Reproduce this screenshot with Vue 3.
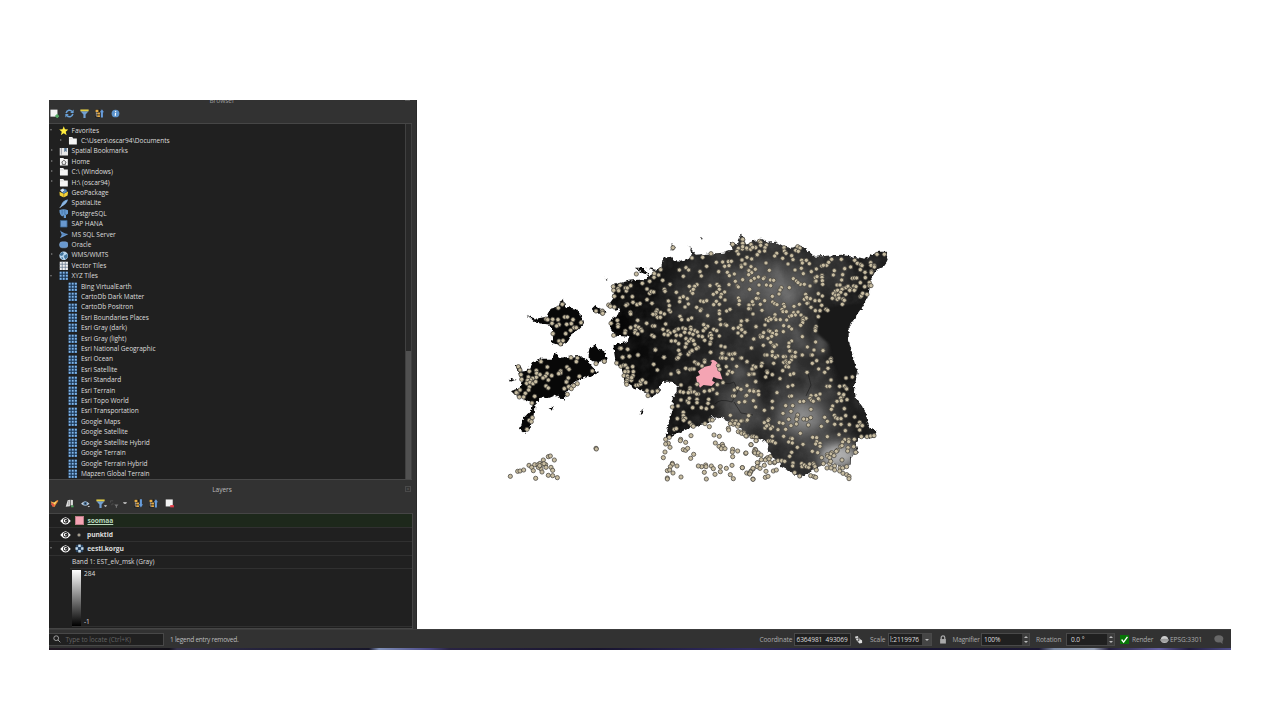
<script setup>
const tree = [
  ['Favorites', 'star', 0, 'v'], ['C:\\Users\\oscar94\\Documents', 'folder', 1, '>'],
  ['Spatial Bookmarks', 'book', 0, '>'], ['Home', 'home', 0, '>'], ['C:\\ (Windows)', 'folder', 0, '>'],
  ['H:\\ (oscar94)', 'folder', 0, '>'], ['GeoPackage', 'gpkg', 0], ['SpatiaLite', 'feather', 0],
  ['PostgreSQL', 'pg', 0], ['SAP HANA', 'hana', 0], ['MS SQL Server', 'mssql', 0], ['Oracle', 'oracle', 0],
  ['WMS/WMTS', 'globe', 0, '>'], ['Vector Tiles', 'vgrid', 0], ['XYZ Tiles', 'grid', 0, 'v'],
  ...['Bing VirtualEarth', 'CartoDb Dark Matter', 'CartoDb Positron', 'Esri Boundaries Places', 'Esri Gray (dark)',
    'Esri Gray (light)', 'Esri National Geographic', 'Esri Ocean', 'Esri Satellite', 'Esri Standard', 'Esri Terrain',
    'Esri Topo World', 'Esri Transportation', 'Google Maps', 'Google Satellite', 'Google Satellite Hybrid',
    'Google Terrain', 'Google Terrain Hybrid', 'Mapzen Global Terrain'].map(n => [n, 'grid', 1])
].map(([name, icon, level, arrow]) => ({ name, icon, level, arrow }))

// Sample points, grouped by map tile; tile-local units are a third of a pixel.
const tiles = [
  [500, 290, `187,43 175,54 138,87 143,89 158,88 174,89 156,100 177,104 170,108 194,81 202,81 200,103 219,89 243,98 214,101 222,113 229,113 212,121 197,131 159,131 177,153 189,152 182,162 288,63 307,63 307,69 288,221 313,214 213,203 232,204 229,215 123,215 142,231 201,231 207,238 182,243 182,249 176,251 55,230 60,240 63,254 65,268 88,244 109,242 110,250 120,254 141,251 155,257 136,259 129,264 145,270 109,262 98,265 92,270 85,261 83,271 80,280 90,277 88,291 99,281 107,275 138,288 145,294 86,300 76,310 60,300 52,309 49,308 58,321 71,321 104,319 96,339 238,259 205,264 200,275 199,276 277,243 193,296 206,290 214,296 221,287 232,281 202,313 97,383 88,391 94,395 81,418 31,559 53,544 60,543 71,540 87,526 95,532 104,524 100,542 107,565 114,524 120,520 127,523 130,510 137,524 138,532 145,500 151,498 163,510 153,532 123,537 115,532 126,546 158,541 145,556 158,557 172,563 288,475 289,477 132,521 119,527`],
  [600, 230, `219,53 276,84 308,82 333,71 398,43 428,28 429,39 453,44 415,55 411,64 427,57 441,57 452,58 467,52 478,34 471,75 415,72 349,97 368,96 385,95 394,94 374,109 387,107 424,107 436,102 441,82 426,90 455,87 465,117 109,132 163,131 176,135 182,119 162,142 149,154 127,160 188,151 238,120 258,113 266,120 250,139 300,125 304,138 320,109 356,125 382,127 388,137 403,132 446,121 454,126 446,134 464,146 453,153 428,150 406,154 387,164 412,168 415,171 448,178 40,170 41,181 43,199 60,166 54,176 56,182 76,174 79,183 82,174 92,167 68,201 97,200 43,231 26,225 31,229 7,245 8,250 82,223 78,226 99,217 111,224 120,221 156,220 141,209 91,247 92,252 52,271 33,280 54,284 54,290 41,316 141,177 149,190 154,185 161,186 193,178 195,184 210,163 229,187 205,213 208,227 211,245 240,204 250,200 262,206 239,215 265,222 255,231 268,169 291,164 284,169 274,184 278,190 280,178 330,167 351,163 357,169 358,178 374,186 364,193 350,187 340,193 362,201 375,210 349,214 358,223 341,224 302,213 311,215 320,212 290,232 303,238 301,242 323,257 358,243 358,251 380,243 390,238 360,268 415,204 418,212 417,223 446,225 450,236 474,205 459,223 171,240 182,248 168,246 166,253 159,253 173,262 181,262 193,252 207,240 240,259 245,269 265,269 275,264 113,271 140,280 158,288 164,288 197,282 107,288 92,293 116,292 106,301 105,308 113,312 123,298 126,303 76,303 75,309 156,316 162,320 189,298 193,313 204,303 210,309 228,300 223,304 235,297 249,294 256,297 254,307 272,292 273,298 285,302 269,309 279,313 292,306 296,318 307,320 311,284 323,289 316,295 310,302 341,298 350,302 331,310 328,318 334,316 362,284 376,284 380,286 358,318 334,325 424,274 441,271 422,286 415,293 425,300 414,309 434,307 425,318 400,295 468,290 462,327 455,354 204,315 229,316 242,316 258,326 214,333 226,333 236,341 259,341 266,333 273,327 280,332 256,351 284,343 314,331 331,337 330,342 294,353 289,356 363,348 375,351 276,362 236,361 265,373 240,373 332,367 368,369 366,379 386,372 405,371 60,355 63,355 83,358 166,359 88,379 114,375 68,382 192,382 233,384 362,384`],
  [740, 230, `8,28 8,40 8,50 20,54 33,44 47,53 62,38 62,46 79,45 75,53 58,65 74,63 52,74 35,87 38,52 6,90 15,102 4,111 33,110 46,118 27,122 35,128 26,134 78,99 88,121 8,149 33,152 43,145 55,141 73,143 70,146 91,150 101,151 57,165 79,165 92,167 29,178 54,190 110,70 104,78 132,53 133,63 138,70 155,77 159,89 128,85 144,102 173,50 180,54 167,61 175,64 185,91 199,91 208,101 187,99 184,115 190,131 165,120 214,125 229,117 245,108 260,106 266,97 275,88 304,88 250,106 283,122 314,116 332,111 344,91 352,100 362,104 366,107 392,98 393,106 403,107 403,111 394,124 394,128 375,127 361,119 411,73 433,73 160,146 169,153 181,163 174,158 193,163 210,168 148,173 226,143 231,140 226,155 228,153 246,136 246,142 247,152 248,163 280,135 308,134 305,150 337,145 343,144 350,144 376,143 361,158 388,158 388,167 393,167 291,165 300,165 309,175 318,173 324,169 331,177 341,168 345,177 348,170 374,170 329,181 343,181 124,173 120,180 117,192 97,199 74,212 61,223 49,205 37,215 27,225 26,236 66,241 39,252 4,273 21,271 98,216 104,221 111,224 131,223 133,230 126,238 129,245 139,245 162,229 161,248 166,255 174,246 183,255 192,263 198,265 188,267 189,271 188,278 182,286 178,223 193,208 202,206 211,206 197,193 200,202 204,219 201,220 213,232 225,212 235,191 247,198 238,212 245,226 240,242 226,242 258,238 263,241 235,260 286,184 293,181 306,178 302,187 280,191 287,196 295,195 277,205 290,206 292,208 297,204 309,207 313,211 307,223 317,193 361,200 364,198 368,190 381,193 105,254 104,264 88,264 79,269 85,272 93,268 108,269 121,269 140,270 149,259 155,257 75,285 48,290 5,299 15,307 41,327 61,317 62,321 71,308 68,320 86,302 90,304 109,303 98,310 95,319 109,313 84,325 92,337 109,345 70,346 100,347 103,350 34,354 131,287 130,305 147,290 155,297 187,320 155,333 147,339 146,350 152,363 228,290 226,296 226,302 227,336 202,351 222,360 249,361 77,375 109,378 136,380 155,380 166,380 186,375 215,375 273,386`],
  [600, 350, `166,0 192,22 231,26 235,23 240,13 265,13 270,6 276,2 332,7 366,10 367,24 389,13 398,12 404,11 378,25 397,27 422,24 441,36 460,50 459,57 467,52 13,34 50,39 63,49 71,46 76,46 82,54 84,65 98,50 100,65 75,65 72,77 82,78 84,86 81,91 79,97 80,103 94,91 99,77 95,83 108,106 115,105 122,102 122,94 127,90 137,98 68,22 88,19 114,15 161,43 172,60 141,122 144,137 157,125 172,123 213,72 234,63 236,67 257,55 270,58 276,57 282,57 284,36 291,41 295,42 306,48 314,31 314,36 355,47 379,50 387,64 397,67 382,72 410,49 457,72 446,72 467,95 359,58 369,98 352,104 338,118 351,131 329,122 313,124 291,103 270,114 270,120 273,126 265,128 283,126 295,132 290,132 243,105 241,125 250,127 243,150 262,153 268,145 291,148 291,158 266,158 304,173 319,176 326,148 324,160 337,171 278,173 217,171 234,168 250,187 250,197 232,206 250,206 256,205 251,211 269,218 275,225 280,229 330,210 337,210 315,221 328,230 223,238 229,236 398,138 403,138 403,120 413,114 423,118 441,107 448,124 467,124 460,121 437,138 417,157 436,155 461,153 467,171 391,196 397,213 398,219 400,223 391,221 385,235 386,240 408,213 405,220 413,229 416,222 426,212 440,212 447,196 415,245 423,246 431,248 440,258 459,259 467,263 469,271 453,284 465,298 463,307 472,309 473,314 197,268 208,262 205,280 197,282 210,292 195,306 190,323 242,268 241,272 257,277 250,299 257,301 263,295 281,313 272,325 273,257 342,255 358,259 346,279 357,289 367,283 369,289 364,296 375,296 398,298 397,306 413,303 398,320 437,310 396,346 427,353 379,355 361,350 361,365 345,373 334,348 340,356 317,345 318,350 305,350 295,348 313,367 319,387 243,381 217,340 217,343 211,350 231,348 202,362 209,360 219,369 202,384 202,387 391,374 400,386 459,387 440,369 448,371 453,363 459,357 474,339`],
  [740, 350, `5,24 21,35 97,5 75,15 81,15 97,17 113,18 106,22 130,20 131,37 138,33 141,38 142,44 154,30 148,37 158,20 165,20 138,50 146,51 66,40 64,48 40,48 36,57 47,51 101,40 149,3 166,7 187,15 214,15 217,15 249,2 272,28 273,34 263,36 230,32 217,40 264,55 254,67 236,57 201,67 128,62 81,64 82,68 97,74 77,81 27,74 42,72 47,95 151,74 161,71 120,86 144,110 158,106 149,139 155,138 21,107 3,118 29,122 41,124 55,124 56,134 20,136 40,152 14,155 47,171 3,213 22,210 26,197 73,181 97,154 97,174 137,167 158,167 180,155 191,154 111,128 213,137 228,136 240,132 210,145 215,151 220,154 237,149 235,146 213,178 129,190 153,184 146,208 173,195 171,204 170,208 200,208 212,203 191,207 205,225 153,227 169,222 118,218 129,220 137,238 114,239 97,231 92,236 86,208 84,212 73,218 85,225 75,234 80,228 5,250 13,252 18,258 36,260 42,260 49,262 48,272 273,90 261,109 269,109 318,84 337,81 299,109 313,108 318,114 320,117 297,131 308,139 311,134 302,144 304,152 321,149 291,154 278,168 274,178 313,176 283,196 287,203 293,206 303,206 317,197 344,201 254,202 262,214 244,229 284,223 303,223 316,242 328,224 359,217 361,225 352,228 367,227 359,240 343,268 364,260 381,260 392,258 402,257 181,250 131,259 153,265 157,266 146,276 157,279 97,259 85,273 92,273 98,274 106,279 172,292 189,283 218,262 230,263 230,275 227,282 240,280 240,289 262,260 314,269 326,269 326,275 308,276 302,289 306,287 324,293 341,290 347,307 323,303 292,301 289,304 275,308 272,312 282,317 262,314 263,319 269,323 245,323 233,308 217,304 297,254 33,284 47,300 18,309 43,305 45,309 55,309 63,315 78,327 83,323 91,320 76,330 87,327 64,329 90,338 103,338 105,336 114,332 125,332 134,334 155,307 149,319 159,339 158,348 185,341 186,350 193,345 199,350 206,352 209,342 220,340 222,344 225,350 229,360 250,341 269,341 272,334 306,330 284,348 261,354 273,354 284,360 300,354 308,354 320,350 299,363 309,370 320,374 327,379 327,386 212,377 222,380 227,382 164,368 179,378 52,338 52,350 39,355 60,355 73,346 78,364 32,366 29,372 39,388 100,363 109,360 76,382 84,379 7,353`]
]
const dots = tiles.flatMap(([ox, oy, s]) => s.split(' ').map(p => {
  const [x, y] = p.split(',').map(Number)
  return { x: ox + x / 3, y: oy + y / 3 }
}))
const tools = ['brush', 'addgroup', 'view', 'filter', 'expr', 'expand', 'collapse', 'remove']
const land = 'M613 285 628 281 647 279 649 276 655 272 645 268 656 270 662 266 663 258 670 257 672 261 680 262 692 257 688 246 695 255 707 254 723 253 732 250 729 242 737 245 740 234 743 240 744 244 750 243 752 239 755 241 760 239 767 243 775 242 784 247 790 248 798 246 804 248 814 257 840 255 865 259 877 252 885 252 888 260 883 267 875 271 870 280 868 294 863 306 848 327 848 340 853 360 857 373 853 387 855 398 865 412 867 423 870 429 876 431 874 438 858 438 855 445 858 453 850 457 851 465 843 467 830 463 818 467 807 473 800 478 790 472 780 467 780 462 772 458 767 450 768 443 760 440 750 437 740 430 732 423 725 421 722 417 715 419 711 416 708 423 690 428 673 435 665 440 668 423 672 410 672 398 677 392 677 387 672 382 662 382 659 387 659 392 650 398 647 393 633 388 625 383 623 372 615 362 613 350 613 345 627 342 628 337 615 336 610 330 610 320 617 315 620 308 615 310 608 305 613 298Z'
</script>

<template>
  <div class="page">
    <svg width="0" height="0" class="defs">
      <symbol id="star" viewBox="0 0 10 10"><path fill="#ffec3d" d="M5 .2 6.3 3.5 9.8 3.7 7.1 6 8 9.6 5 7.6 2 9.6 2.9 6 .2 3.7 3.7 3.5Z"/></symbol>
      <symbol id="folder" viewBox="0 0 10 10"><path fill="#f4f4f4" d="M1 1h3.5l1 1.6H9.3V9H1Z"/><path d="M1 3h3.8" stroke="#aaa" stroke-width=".4"/></symbol>
      <symbol id="book" viewBox="0 0 10 10"><path fill="#e8e8e8" d="M.8 1h8.7v8H.8Z"/><path fill="#5b7895" d="M5.5 1h2.6v4.4L6.8 4.2 5.5 5.4Z"/><path stroke="#667" stroke-width=".6" d="M2.5 1v7"/></symbol>
      <symbol id="home" viewBox="0 0 10 10"><path fill="#f4f4f4" d="M1 1h3.5l1 1.2H9.3V9H1Z"/><path fill="none" stroke="#444" stroke-width=".8" d="M2.5 5.7 5.2 3.4 7.8 5.7M3.5 5.5v2.3h3.3V5.5"/></symbol>
      <symbol id="gpkg" viewBox="0 0 10 10"><path fill="#f5d338" d="M.5 4 5 6v4L.8 8ZM5 6l4.6-2.4L9 8 5 10Z"/><path fill="#d4e5f3" d="M1 2.2 4.2.4l2 2L3.4 4.7Z"/><path fill="#5589bd" d="M4.2.4 8 1.8 8.3 4 5 6 3.4 4.7 6.2 2.4Z"/><path stroke="#7c691c" stroke-width=".6" d="M5 6v4"/></symbol>
      <symbol id="feather" viewBox="0 0 10 10"><path fill="#79a9dc" d="M9.6.5Q4 .8 2 7L.5 9.6 3 7.8Q8 6 9.6.5Z"/><path stroke="#d5e4f4" stroke-width=".5" d="M.5 9.6 8 2"/></symbol>
      <symbol id="pg" viewBox="0 0 10 10"><path fill="#679ad0" d="M.5 1Q5-.4 9.5 1.2V5L7.4 6.4V9.4H5V6.6L3.4 7.8Q1.3 7 .6 3.8Z"/><path fill="none" stroke="#315f90" stroke-width=".6" d="M3.2 1.2v4.5M6.2 1v4.7h1.3M4 3h.6"/></symbol>
      <symbol id="hana" viewBox="0 0 10 10"><path fill="#6999cf" stroke="#39648f" stroke-width=".8" d="M1.5 1.5h7v7h-7Z"/></symbol>
      <symbol id="mssql" viewBox="0 0 10 10"><path fill="#6999cf" d="M1 .2Q3.5 3 9.8 4.3 6 6.8 1 8.6L2.9 5Z"/><path stroke="#315f90" stroke-width=".5" d="M2.5 4.3h4"/></symbol>
      <symbol id="oracle" viewBox="0 0 10 10"><rect x=".6" y="1.9" width="8.8" height="6.3" rx="2.6" fill="#6999cf" stroke="#8fb4df" stroke-width=".5"/></symbol>
      <symbol id="globe" viewBox="0 0 10 10"><circle cx="5" cy="5" r="4.6" fill="#bad7ee"/><path fill="#44779f" d="M1 3 4 1l1.2 2-2 2.2L1 4.5ZM5 5l3.8-2 .4 3L7 8.6 5.6 7ZM2 7l2-.5.6 2.6Z"/></symbol>
      <symbol id="grid" viewBox="0 0 10 10"><path fill="#386aa0" d="M.7.7h8.8v8.8H.7Z"/><path fill="#83b7e9" d="M.8.8h2v2h-2zM4 .8h2v2H4zM7.2.8h2v2h-2zM.8 4h2v2h-2zM4 4h2v2H4zM7.2 4h2v2h-2zM.8 7.2h2v2h-2zM4 7.2h2v2H4zM7.2 7.2h2v2h-2z"/><path stroke="#1d3148" stroke-width=".8" d="M3.4.5v9M6.6.5v9M.5 3.4h9M.5 6.6h9"/></symbol>
      <symbol id="vgrid" viewBox="0 0 10 10"><path fill="#f3f3f3" d="M.8.8h8.6v8.6H.8Z"/><path stroke="#65758a" stroke-width=".8" d="M3.4.5v9M6.6.5v9M.5 3.4h9M.5 6.6h9"/></symbol>
      <symbol id="eye" viewBox="0 0 12 10"><path fill="#fff" d="M.3 5Q6-3 11.7 5 6 12.7.3 5Z"/><circle cx="6.2" cy="4.7" r="2.9" fill="#222"/><circle cx="6" cy="4.7" r="1.9" fill="#fff"/><circle cx="6.6" cy="4.7" r="1.2" fill="#222"/></symbol>
      <symbol id="view" viewBox="0 0 10 10"><path fill="#c6d2dd" d="M0 5.3Q4.6-.5 9.4 5.3 5 9.8 0 5.3Z"/><circle cx="4.8" cy="5" r="2.3" fill="#5c83a9"/><circle cx="4.8" cy="5" r="1" fill="#1d2b39"/><path fill="#ddd" d="M7.3 7.7h2.7L8.7 9.3Z"/></symbol>
      <symbol id="filter" viewBox="0 0 10 10"><path fill="#719fd2" d="M.5 2.5h9L6.2 6v4H3.8V6Z"/><path fill="#e3ce45" d="M.4.5h9.2v2H.4Z"/></symbol>
      <symbol id="collapse" viewBox="0 0 10 10"><path fill="#161616" d="M.3.5h5v8.8h-5Z"/><path fill="#e6ac47" d="M.6.7h3.2v2.6H.6ZM2.5 3.9h3v2.1h-3ZM2.5 6.9h3v2.1h-3Z"/><path fill="none" stroke="#ccc" stroke-width=".7" d="M1.4 3.2v4.9h1.2M1.4 4.9h1.2"/><path fill="#679cdb" d="M7.7.3 10 3.7H8.8v5.8H6.6V3.7H5.4Z"/></symbol>
      <symbol id="expand" viewBox="0 0 10 10"><path fill="#161616" d="M.3.5h5v8.8h-5Z"/><path fill="#e6ac47" d="M.6.7h3.2v2.6H.6ZM2.5 3.9h3v2.1h-3ZM2.5 6.9h3v2.1h-3Z"/><path fill="none" stroke="#ccc" stroke-width=".7" d="M1.4 3.2v4.9h1.2M1.4 4.9h1.2"/><path fill="#679cdb" d="M6.6.4h2.2v5.4H10L7.7 9.4 5.4 5.8h1.2Z"/></symbol>
      <symbol id="info" viewBox="0 0 10 10"><circle cx="5" cy="5" r="4.3" fill="#5d94cd"/><circle cx="5.2" cy="2.7" r=".7" fill="#fff"/><path stroke="#fff" stroke-width="1.2" d="M5.1 4.2 4.7 7.7"/></symbol>
      <symbol id="refresh" viewBox="0 0 10 10"><path fill="none" stroke="#69a0d7" stroke-width="1.8" d="M1.3 4.5C2 1 6 .5 7.8 2.7M8.7 5.5C8 9 4 9.5 2.2 7.3"/><path fill="#69a0d7" d="M9.6.5v4H5.8ZM.4 9.5v-4h3.8Z"/></symbol>
      <symbol id="addlayer" viewBox="0 0 10 10"><path fill="#f3f3f3" d="M.5.7h7.8v7.8H.5Z"/><path stroke="#52a662" stroke-width="2" d="M8 5.7V10M5.8 8h4.4"/></symbol>
      <symbol id="remove" viewBox="0 0 10 10"><path fill="#f3f3f3" d="M.8.5h7.8v7.8H.8Z"/><path fill="#e23c47" d="M5.8 6.8h4.1v2.5H5.8Z"/></symbol>
      <symbol id="brush" viewBox="0 0 10 10"><path fill="#e88d3a" d="M.8 2.6 4.4 4.2 8 1.2 9.4 2 6.6 6 5 9 2.5 8Z"/><path fill="#db5445" d="M.8 5.5 3 4.5l2 2.4L3.4 9Z"/><path fill="#ffe26c" d="m1.5 2.8 3 1.3L7.6 2 5.4 6Z"/></symbol>
      <symbol id="addgroup" viewBox="0 0 10 10"><path fill="#ddd" d="m3 1.4 2.5-.7V8L.8 8.7ZM6.2.9l2.6.2v6H6.2Z"/><path fill="#52a662" d="M6.8 7.2h2.7v2H6.8Z"/><path stroke="#777" stroke-width=".5" d="M4 2v5"/></symbol>
      <symbol id="expr" viewBox="0 0 10 10"><path fill="none" stroke="#555" stroke-width=".8" d="M.5 4V2h3M2 7V5.5h2"/><path fill="#777" d="M4.8 6.2h4.6L7.7 8v1.6H6.5V8Z"/></symbol>
    </svg>
    <div class="window">
      <div class="main">
        <aside>
          <div class="browser-title"><span>Browser</span><i></i></div>
          <div class="tools top">
            <svg v-for="i in ['addlayer','refresh','filter','collapse','info']" :key="i"><use :href="'#' + i"/></svg>
          </div>
          <div class="browser">
            <ul>
              <li v-for="n in tree" :key="n.name" :class="{ child: n.level }">
                <b :class="{ down: n.arrow === 'v', right: n.arrow === '>' }"></b>
                <svg><use :href="'#' + n.icon"/></svg><span>{{ n.name }}</span>
              </li>
            </ul>
            <div class="scroll"><div></div></div>
          </div>
          <div class="layer-title"><span>Layers</span><i>×</i></div>
          <div class="tools low">
            <template v-for="t in tools" :key="t"><svg :class="t"><use :href="'#' + t"/></svg><em v-if="t === 'filter' || t === 'expr'" :class="'after-' + t"></em></template>
          </div>
          <div class="layers">
            <div class="layer active"><b></b><svg class="vis"><use href="#eye"/></svg><i class="pink"></i><span>soomaa</span></div>
            <div class="layer"><b></b><svg class="vis"><use href="#eye"/></svg><i class="point"></i><span>punktid</span></div>
            <div class="layer"><b class="down"></b><svg class="vis"><use href="#eye"/></svg>
              <svg class="raster" viewBox="0 0 10 10"><path fill="#294564" d="M1 1h8v8H1Z"/><path fill="#c7dff0" d="M3.6.5h2.8v2.7H3.6ZM.5 3.6h2.7v2.8H.5ZM6.8 3.6h2.7v2.8H6.8ZM3.6 6.8h2.8v2.7H3.6Z"/></svg><span>eesti.korgu</span></div>
            <div class="band">Band 1: EST_elv_msk (Gray)</div>
            <div class="legend"><i></i><div><span>284</span><span>-1</span></div></div>
          </div>
        </aside>
        <svg class="map" viewBox="417 100 814 529">
          <defs>
            <filter id="rag" x="-5%" y="-5%" width="110%" height="110%" color-interpolation-filters="sRGB"><feTurbulence type="fractalNoise" baseFrequency=".28" numOctaves="2" seed="4"/><feDisplacementMap in="SourceGraphic" scale="4.5" xChannelSelector="R" yChannelSelector="G"/></filter>
            <filter id="soft" x="-60%" y="-60%" width="220%" height="220%" color-interpolation-filters="sRGB"><feGaussianBlur stdDeviation="9"/></filter>
            <filter id="soft2" x="-60%" y="-60%" width="220%" height="220%" color-interpolation-filters="sRGB"><feGaussianBlur stdDeviation="3.5"/></filter>
            <filter id="edge" color-interpolation-filters="sRGB"><feGaussianBlur stdDeviation=".8"/></filter>
            <filter id="relief" color-interpolation-filters="sRGB"><feTurbulence type="fractalNoise" baseFrequency=".06" numOctaves="5" seed="9"/><feColorMatrix values="0 0 0 0 1  0 0 0 0 1  0 0 0 0 1  1.8 0 0 0 -.6"/></filter>
            <linearGradient id="base" x1="610" x2="860" y1="345" y2="300" gradientUnits="userSpaceOnUse"><stop stop-color="#020202"/><stop offset=".2" stop-color="#101010"/><stop offset=".45" stop-color="#282828"/><stop offset=".7" stop-color="#2d2d2d"/><stop offset="1" stop-color="#181818"/></linearGradient>
            <clipPath id="landclip"><path :d="land"/></clipPath>
          </defs>
          <g filter="url(#rag)" transform="translate(.7 -.2)">
            <path fill="url(#base)" :d="land"/>
            <g fill="#080808">
              <path d="M527 316 535 319 546 317 550 309 557 307 558 303 563 300 565 307 575 309 580 315 583 325 578 330 571 333 570 337 567 342 560 346 551 343 553 334 550 325 535 323Z"/>
              <path d="M515 370 520 372 527 371 531 363 541 359 551 359 555 351 558 358 570 357 580 356 588 363 597 373 588 377 577 380 570 385 565 394 564 401 555 395 548 398 540 398 535 403 534 414 529 430 524 434 519 430 523 418 531 410 532 404 524 400 515 395 511 391 518 389 521 385 523 377Z"/>
              <path d="M588 350 594 346 604 352 606 360 595 363 588 358ZM591 309 594 306 600 310 606 312 602 315 593 312ZM515 366 520 366 524 379 520 380ZM509 379 515 380 510 382ZM549 408 553 406 551 411ZM640 410 643 409 642 414 639 415ZM634 268 641 268 650 276 642 273ZM671 243 675 248 671 251ZM604 278 607 279 606 280ZM700 237 702 239 701 240Z"/>
            </g>
          </g>
          <g clip-path="url(#landclip)">
            <g filter="url(#soft)" fill="#b0b0b0">
              <ellipse cx="768" cy="285" rx="40" ry="22" opacity=".33"/><ellipse cx="786" cy="322" rx="22" ry="36" opacity=".18"/>
              <ellipse cx="802" cy="418" rx="22" ry="17" opacity=".72"/><ellipse cx="742" cy="405" rx="17" ry="26" opacity=".3"/>
              <ellipse cx="812" cy="400" rx="34" ry="30" opacity=".1"/><ellipse cx="838" cy="456" rx="20" ry="13" opacity="1"/>
              <ellipse cx="825" cy="275" rx="35" ry="17" opacity=".12"/><ellipse cx="700" cy="300" rx="35" ry="28" opacity=".1"/>
            </g>
            <g filter="url(#soft2)"><path fill="none" stroke="#999" stroke-width="6" opacity=".25" d="M773 268Q785 286 790 302M794 328 806 352"/><ellipse cx="821" cy="345" rx="7" ry="10" fill="#777" opacity=".55"/><ellipse cx="738" cy="372" rx="7" ry="8" fill="#888" opacity=".45"/><ellipse cx="838" cy="455" rx="16" ry="9" fill="#c0c0c0" opacity=".6"/><path fill="#151515" opacity=".75" d="M755 358 777 370 772 380 766 415 757 390ZM790 374 808 378 800 386Z"/></g>
            <rect x="605" y="230" width="285" height="250" filter="url(#relief)" opacity=".09"/>
            <path filter="url(#soft2)" fill="#191919" d="M828 325 848 378 855 408 880 440 860 438 842 400 834 380Z" opacity=".8"/>
            <g fill="none" stroke="#161616" stroke-width=".8" opacity=".65"><path d="M718 378Q725 387 734 382L738 391 732 402Q720 398 715 404M734 402 741 413 753 415M807 370 811 385 806 396"/></g>
            <path filter="url(#edge)" fill="#191919" d="M817 318 820 312 830 307 842 305 866 302 852 327 849 340 860 380 845 384 837 373 833 362 829 344 818 334Z"/>
          </g>
          <path class="park" d="M710 361 713 359.8 715.5 361 718.3 363.5 717.7 368 720 372 722.5 379.5 717 378.5 713.5 377 712 380.5 715 382.5 711.5 386 703.5 385 700 387.8 697 382 696 377 700 375 698 371.5 703.5 367 710.5 365.5 712 362Z"/>
          <circle v-for="(p, k) in dots" :key="k" :cx="p.x" :cy="p.y" r="2.1"/>
        </svg>
      </div>
      <footer>
        <div class="locate"><svg viewBox="0 0 10 10"><circle cx="4" cy="4" r="3"/><path d="m6.2 6.2 3 3"/></svg><span>Type to locate (Ctrl+K)</span></div>
        <span class="message">1 legend entry removed.</span>
        <label class="l-coord">Coordinate</label><div class="field coord">6364981&nbsp; 493069</div>
        <svg class="mouse" viewBox="0 0 10 10"><path fill="#ddd" d="M1 2 4 1 6 4 9 6 9 9 6 9.5 3 6Z"/><path stroke="#444" fill="none" stroke-width=".7" d="M2 4 7 3M3 7 7 5M5 1v6"/></svg>
        <label class="l-scale">Scale</label><div class="field scale">l:2119976<b></b></div>
        <svg class="lock" viewBox="0 0 8 10"><path fill="none" stroke="#aaa" stroke-width="1.4" d="M2 5V3a2 2 0 0 1 4 0v2"/><path fill="#aaa" d="M.8 4.5h6.4v5H.8Z"/></svg>
        <label class="l-mag">Magnifier</label><div class="field mag">100%<u></u></div>
        <label class="l-rot">Rotation</label><div class="field rot">0.0 °<u></u></div>
        <svg class="check" viewBox="0 0 10 10"><path fill="#077507" d="M0 0h10v10H0Z"/><path fill="none" stroke="#fff" stroke-width="1.5" d="m1.8 5 2.2 3L8.3 2"/></svg><label class="render">Render</label>
        <svg class="crs" viewBox="0 0 10 10"><circle cx="5" cy="5" r="4" fill="#ccc"/><ellipse cx="5" cy="5.5" rx="4.8" ry="1.7" fill="#aaa"/><path stroke="#777" stroke-width=".6" d="M.7 5.5h8.6M2.4 7.6h5"/></svg><label class="epsg">EPSG:3301</label>
        <svg class="bubble" viewBox="0 0 11 10"><ellipse cx="5.3" cy="4.3" rx="5" ry="4"/><path d="m6 7 3.5 3-.3-4Z"/></svg>
      </footer>
      <div class="desktop"></div>
    </div>
  </div>
</template>

<style>
body { background: #fff; }
</style>
<style scoped>
* { box-sizing: border-box; }
.page { width: 1280px; height: 720px; padding: 100px 49px 0; background: #fff; overflow: hidden; font: 6.55px/10px "Open Sans", "Noto Sans", sans-serif; letter-spacing: -.03px; color: #ddd; }
.defs { display: block; }
.window { width: 1182px; height: 550px; display: flex; flex-direction: column; background: #323232; overflow: hidden; }
.main { height: 529px; display: flex; }
aside { width: 368px; height: 529px; display: flex; flex-direction: column; flex: none; background: #323232; border-right: 1px solid #2a2a2a; }
.map { width: 814px; height: 529px; background: #fff; }
.map circle { fill: #c8bda1; stroke: #45433e; stroke-width: .75; }
.map .park { fill: #f4a4b3; }
.browser-title { height: 5px; overflow: hidden; display: flex; justify-content: center; align-items: flex-end; position: relative; color: #999; }
.browser-title span { margin-left: -21px; line-height: 8px; }
.browser-title i { width: 5px; height: 1px; background: #555; position: absolute; right: 6px; top: 0; }
.tools { display: flex; align-items: center; }
.tools svg { width: 9px; height: 9px; flex: none; }
.top { height: 18px; padding: 0 0 2px 1.2px; gap: 6.1px; }
.browser { height: 357px; width: 363px; border-top: 1px solid #464646; border-bottom: 1px solid #484848; background: #202020; display: flex; justify-content: space-between; overflow: hidden; }
ul { margin: 1.3px 0 0; padding: 0; list-style: none; }
li { height: 10.41px; display: flex; align-items: center; white-space: nowrap; padding-left: 1px; }
li.child { padding-left: 10.3px; }
li svg { width: 9.5px; height: 9.5px; flex: none; margin-left: 3.5px; }
li span { margin-left: 3.6px; }
li b, .layer b { width: 5px; height: 5px; flex: none; position: relative; }
b.down::after { content: ""; position: absolute; left: .2px; top: 1px; border: 1.8px solid transparent; border-top: 2.6px solid #777; }
b.right::after { content: ""; position: absolute; left: 1px; top: .3px; border: 1.8px solid transparent; border-left: 2.6px solid #777; }
.scroll { width: 7px; background: #292929; border: 1px solid #404040; border-width: 0 1px; padding-top: 227px; }
.scroll div { height: 129px; background: #505050; }
.layer-title { height: 17px; display: flex; justify-content: center; align-items: center; position: relative; color: #bbb; padding-top: 3.5px; }
.layer-title span { margin-left: -21px; }
.layer-title i { position: absolute; right: 5px; top: 6px; width: 6px; height: 6px; border: 1px solid #4a4a4a; color: #606060; font: 6px/4px "Open Sans", sans-serif; text-align: center; }
.low { height: 16px; padding: 0 0 3px 1.3px; gap: 6.2px; }
.low .expr { margin-left: 1px; }
.low em { width: 3.2px; height: 4px; flex: none; border: 1.6px solid transparent; border-top: 2.2px solid #aaa; margin: 0 1.4px 0 -2px; }
.low .after-filter { margin: 7px -4px 0 -7.2px; }
.layers { width: 364px; height: 116px; background: #202020; border: 1px solid #454545; border-left: 0; overflow: hidden; }
.layer { height: 14px; display: flex; align-items: center; border-bottom: 1px solid #303030; padding-left: 1px; font-weight: bold; font-size: 6.7px; letter-spacing: -.08px; }
.vis { width: 11px; height: 10px; margin-left: 5px; }
.active { background: linear-gradient(90deg, #202020 22px, #1d281b 22px); color: #b9d7bc; }
.active span { text-decoration: underline; text-underline-offset: .5px; }
.layer span { margin-left: 3.5px; }
.pink { width: 9px; height: 9px; margin-left: 4px; background: #f4a4b3; border: .5px solid #bc7c88; }
.point { width: 4px; height: 4px; border-radius: 50%; background: #cabfa5; border: .5px solid #555; margin: 0 2.5px 0 6px; }
.raster { width: 9px; height: 9px; margin-left: 3.7px; }
.band { height: 13px; margin-left: 21px; padding-left: 2px; line-height: 12px; border-bottom: 1px solid #303030; letter-spacing: 0; }
.legend { height: 58px; margin-left: 23px; display: flex; border-bottom: 1px solid #303030; padding-top: 1px; }
.legend i { width: 9px; height: 56px; background: linear-gradient(#fff, #000); }
.legend div { margin: -1px 0 0 3px; height: 58px; display: flex; flex-direction: column; justify-content: space-between; }
footer { height: 19px; flex: none; display: flex; align-items: center; white-space: nowrap; background: #323232; color: #aaa; border-top: 1px solid #3c3c3c; letter-spacing: -.06px; }
footer > * { flex: none; }
footer label, .message { padding-top: 1px; }
.locate { width: 115px; height: 13px; background: #202020; border: 1px solid #484848; border-left: 0; display: flex; align-items: center; color: #646464; }
.locate span { padding-top: 1px; }
.locate svg { width: 8px; height: 8px; margin: 0 4.5px 0 4px; fill: none; stroke: #bbb; }
.message { width: 590px; padding-left: 6px; color: #bbb; letter-spacing: -.26px; }
.field { height: 13px; border: 1px solid #494949; background: #202020; color: #ddd; line-height: 12px; padding-left: 2px; display: flex; justify-content: space-between; overflow: hidden; }
.l-coord { width: 34px; margin-left: 5.5px; letter-spacing: -.12px; }
.coord { width: 57px; }
.mouse { width: 9px; height: 9px; margin-left: 3px; }
.l-scale { width: 18px; margin-left: 7.5px; }
.scale { width: 44px; padding-left: 1px; }
.scale b { width: 9px; background: #454545; position: relative; }
.scale b::after { content: ""; position: absolute; top: 5px; left: 2.5px; border: 2px solid transparent; border-top-color: #bbb; }
.lock { width: 8px; height: 9px; margin-left: 7px; }
.l-mag { width: 28.5px; margin-left: 5.5px; letter-spacing: -.2px; }
.mag { width: 49px; }
u { width: 7px; background: #3c3c3c; position: relative; }
u::before, u::after { content: ""; position: absolute; left: 1.5px; border: 2px solid transparent; }
u::before { top: 0; border-bottom-color: #bbb; }
u::after { bottom: 0; border-top-color: #bbb; }
.l-rot { width: 30px; margin-left: 6px; }
.rot { width: 49px; padding-left: 4px; }
.check { width: 9px; height: 9px; margin-left: 5px; }
.render { width: 22px; margin-left: 3px; letter-spacing: -.12px; }
.crs { width: 9px; height: 9px; margin-left: 6px; }
.epsg { width: 31.5px; margin-left: 1px; }
.bubble { width: 10px; height: 9px; margin-left: 12px; fill: #686868; }
.desktop { height: 2px; background: linear-gradient(90deg, #211723, #121018 120px, #34304a 128px, #24223b 210px, #17162a 320px, #8090b8 330px, #4c4a8a 380px, #292343 400px, #17132d 550px, #322d66 700px, #181532 820px, #1c1835 990px, #7d8ba5 1005px, #9ba5bb 1045px, #252040 1060px, #6662a5 1110px, #211c40 1140px, #51508b); }
</style>
